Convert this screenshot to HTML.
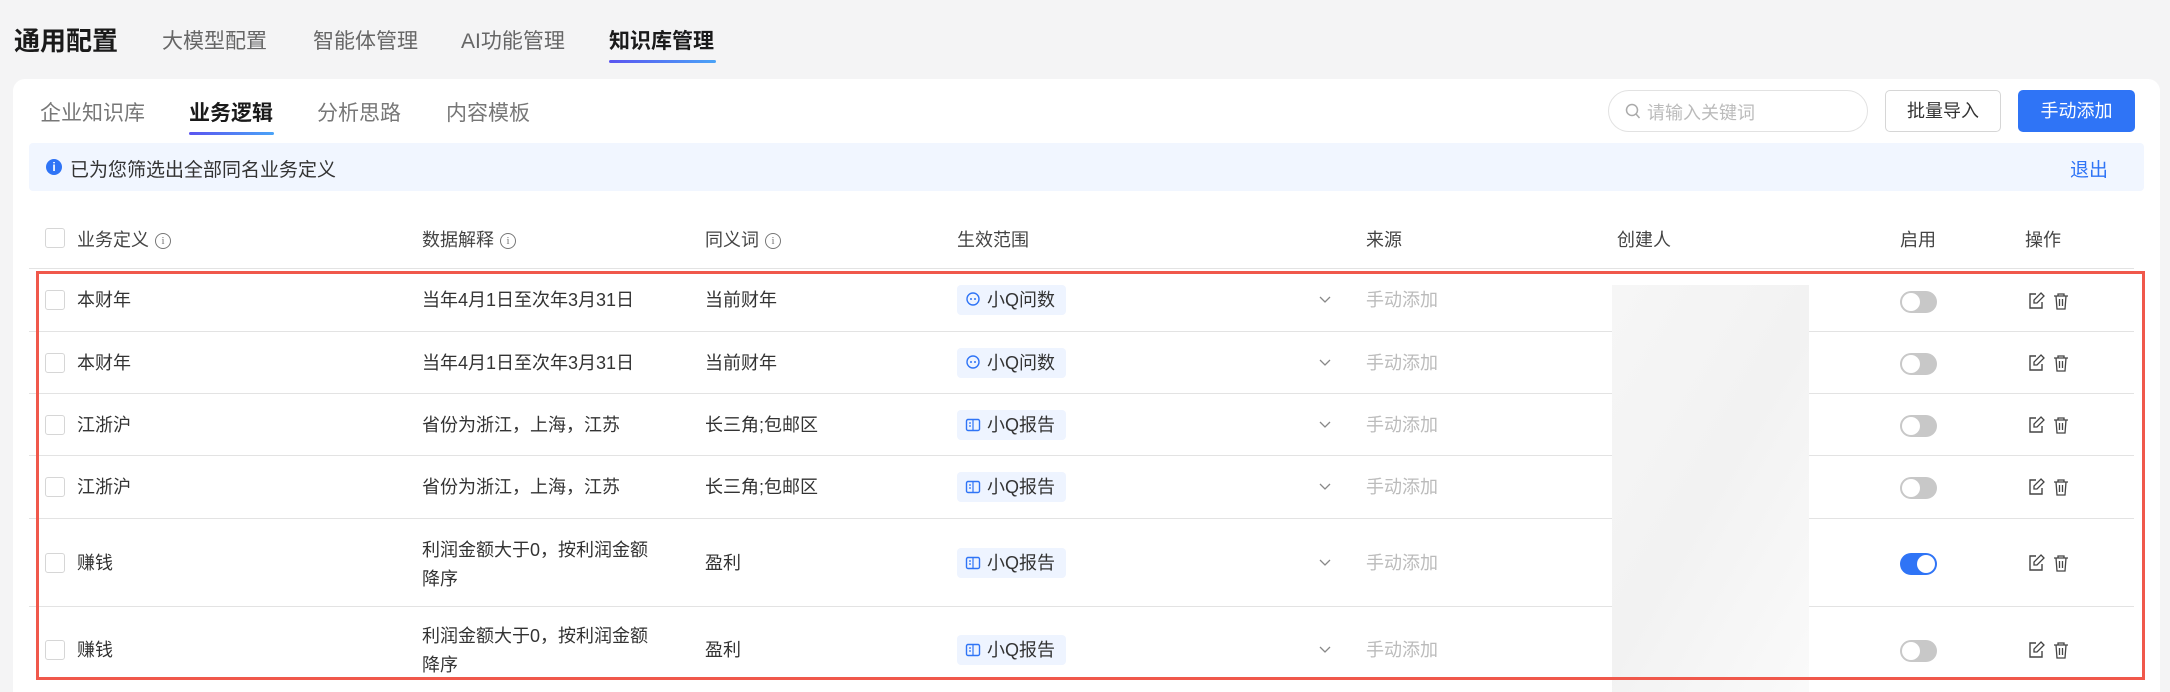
<!DOCTYPE html>
<html style="width:2170px;height:692px;overflow:hidden"><head><meta charset="utf-8"><style>
*{margin:0;padding:0;box-sizing:border-box}
body{width:2170px;height:692px;background:#f4f4f5;font-family:"Liberation Sans","Noto Sans CJK SC",sans-serif;position:relative;overflow:hidden;color:#222}
.a{position:absolute;white-space:nowrap}
.card{position:absolute;left:13px;top:79px;width:2147px;height:613px;background:#fff;border-radius:12px 12px 0 0}
.t{font-size:18px;color:#333;line-height:24px}
.h{font-size:18px;color:#444}
.cb{position:absolute;width:20px;height:20px;border:1px solid #d6d6d6;border-radius:3px;background:#fff}
.line{position:absolute;left:29px;width:2105px;height:1px;background:#e3e3e3}
.tag{position:absolute;left:957px;width:109px;height:30px;background:#eef4ff;border-radius:4px;font-size:18px;color:#333;line-height:30px;padding-left:30px}
.tag svg{position:absolute;left:8px;top:7px}
.tog{position:absolute;left:1900px;width:37px;height:22px;border-radius:11px;background:#c8c8c8}
.tog::after{content:"";position:absolute;left:2px;top:2px;width:18px;height:18px;border-radius:50%;background:#fff}
.tog.on{background:#2f74f6}.tog.on::after{left:17px}
.info{display:inline-block;width:16px;height:16px;border:1.3px solid #777;border-radius:50%;font-size:11px;line-height:14px;text-align:center;color:#777;vertical-align:2px;margin-left:6px;font-family:"Liberation Serif",serif}
</style></head><body>
<div class="a" style="left:14px;top:21px;font-size:26px;font-weight:bold;color:#1a1a1a">通用配置</div>
<div class="a" style="left:162px;top:25px;font-size:21px;color:#666">大模型配置</div>
<div class="a" style="left:313px;top:25px;font-size:21px;color:#666">智能体管理</div>
<div class="a" style="left:461px;top:25px;font-size:21px;color:#666">AI功能管理</div>
<div class="a" style="left:609px;top:25px;font-size:21px;color:#1a1a1a;font-weight:bold">知识库管理</div>
<div class="a" style="left:609px;top:60px;width:107px;height:3px;border-radius:2px;background:linear-gradient(90deg,#5b55f0,#4aa3f7)"></div>

<div class="card"></div>
<div class="a" style="left:40px;top:97px;font-size:21px;color:#777">企业知识库</div>
<div class="a" style="left:189px;top:97px;font-size:21px;color:#1a1a1a;font-weight:bold">业务逻辑</div>
<div class="a" style="left:189px;top:132px;width:85px;height:3px;border-radius:2px;background:linear-gradient(90deg,#5b55f0,#4aa3f7)"></div>
<div class="a" style="left:317px;top:97px;font-size:21px;color:#777">分析思路</div>
<div class="a" style="left:446px;top:97px;font-size:21px;color:#777">内容模板</div>

<div class="a" style="left:1608px;top:90px;width:260px;height:42px;border:1px solid #e2e2e2;border-radius:21px"></div>
<svg class="a" style="left:1625px;top:103px" width="16" height="17" viewBox="0 0 16 17"><circle cx="7" cy="7" r="5.5" fill="none" stroke="#aaa" stroke-width="1.5"/><path d="M11 11l3.5 4" stroke="#aaa" stroke-width="1.5"/></svg>
<div class="a" style="left:1647px;top:99px;font-size:18px;color:#bbb">请输入关键词</div>
<div class="a" style="left:1885px;top:90px;width:116px;height:42px;border:1px solid #d6d6d6;border-radius:5px;font-size:18px;color:#333;text-align:center;line-height:40px">批量导入</div>
<div class="a" style="left:2018px;top:90px;width:117px;height:42px;background:#2f74f6;border-radius:5px;font-size:18px;color:#fff;text-align:center;line-height:42px">手动添加</div>

<div class="a" style="left:29px;top:143px;width:2115px;height:48px;background:#f1f6ff;border-radius:4px"></div>
<div class="a" style="left:46px;top:159px;width:16px;height:16px;border-radius:50%;background:#2f74f6;color:#fff;font-size:12px;text-align:center;line-height:16px;font-weight:bold">i</div>
<div class="a" style="left:70px;top:155px;font-size:19px;color:#333">已为您筛选出全部同名业务定义</div>
<div class="a" style="left:2070px;top:155px;font-size:19px;color:#2f74f6">退出</div>

<div class="cb" style="left:45px;top:228px"></div>
<div class="a h" style="left:77px;top:226px">业务定义<span class="info">i</span></div>
<div class="a h" style="left:422px;top:226px">数据解释<span class="info">i</span></div>
<div class="a h" style="left:705px;top:226px">同义词<span class="info">i</span></div>
<div class="a h" style="left:957px;top:226px">生效范围</div>
<div class="a h" style="left:1366px;top:226px">来源</div>
<div class="a h" style="left:1617px;top:226px">创建人</div>
<div class="a h" style="left:1900px;top:226px">启用</div>
<div class="a h" style="left:2025px;top:226px">操作</div>
<div class="line" style="top:268px"></div>
<div class="line" style="top:331px"></div>
<div class="line" style="top:393px"></div>
<div class="line" style="top:455px"></div>
<div class="line" style="top:518px"></div>
<div class="line" style="top:606px"></div>

<div class="a" style="left:1612px;top:285px;width:197px;height:407px;background:linear-gradient(120deg,#f6f6f6,#f2f2f2 50%,#fafafa)"></div>

<div class="cb" style="left:45px;top:290px"></div><div class="a t" style="left:77px;top:288px">本财年</div><div class="a t" style="left:422px;top:288px">当年4月1日至次年3月31日</div><div class="a t" style="left:705px;top:288px">当前财年</div>
<div class="tag" style="top:285px"><svg width="16" height="16" viewBox="0 0 16 16"><circle cx="8" cy="7" r="6" fill="none" stroke="#2f74f6" stroke-width="1.4"/><circle cx="6" cy="7" r="1" fill="#2f74f6"/><circle cx="10" cy="7" r="1" fill="#2f74f6"/></svg>小Q问数</div>
<div class="cb" style="left:45px;top:353px"></div><div class="a t" style="left:77px;top:351px">本财年</div><div class="a t" style="left:422px;top:351px">当年4月1日至次年3月31日</div><div class="a t" style="left:705px;top:351px">当前财年</div>
<div class="tag" style="top:348px"><svg width="16" height="16" viewBox="0 0 16 16"><circle cx="8" cy="7" r="6" fill="none" stroke="#2f74f6" stroke-width="1.4"/><circle cx="6" cy="7" r="1" fill="#2f74f6"/><circle cx="10" cy="7" r="1" fill="#2f74f6"/></svg>小Q问数</div>
<div class="cb" style="left:45px;top:415px"></div><div class="a t" style="left:77px;top:413px">江浙沪</div><div class="a t" style="left:422px;top:413px">省份为浙江，上海，江苏</div><div class="a t" style="left:705px;top:413px">长三角;包邮区</div>
<div class="tag" style="top:410px"><svg width="16" height="16" viewBox="0 0 16 16"><rect x="1.5" y="2.5" width="13" height="11" rx="1.5" fill="none" stroke="#2f74f6" stroke-width="1.4"/><path d="M8 3v10M4 6h2M4 9h2" stroke="#2f74f6" stroke-width="1.2"/></svg>小Q报告</div>
<div class="cb" style="left:45px;top:477px"></div><div class="a t" style="left:77px;top:475px">江浙沪</div><div class="a t" style="left:422px;top:475px">省份为浙江，上海，江苏</div><div class="a t" style="left:705px;top:475px">长三角;包邮区</div>
<div class="tag" style="top:472px"><svg width="16" height="16" viewBox="0 0 16 16"><rect x="1.5" y="2.5" width="13" height="11" rx="1.5" fill="none" stroke="#2f74f6" stroke-width="1.4"/><path d="M8 3v10M4 6h2M4 9h2" stroke="#2f74f6" stroke-width="1.2"/></svg>小Q报告</div>
<div class="cb" style="left:45px;top:553px"></div><div class="a t" style="left:77px;top:551px">赚钱</div><div class="a t" style="left:422px;top:536px;line-height:29px">利润金额大于0，按利润金额<br>降序</div><div class="a t" style="left:705px;top:551px">盈利</div>
<div class="tag" style="top:548px"><svg width="16" height="16" viewBox="0 0 16 16"><rect x="1.5" y="2.5" width="13" height="11" rx="1.5" fill="none" stroke="#2f74f6" stroke-width="1.4"/><path d="M8 3v10M4 6h2M4 9h2" stroke="#2f74f6" stroke-width="1.2"/></svg>小Q报告</div>
<div class="cb" style="left:45px;top:640px"></div><div class="a t" style="left:77px;top:638px">赚钱</div><div class="a t" style="left:422px;top:622px;line-height:29px">利润金额大于0，按利润金额<br>降序</div><div class="a t" style="left:705px;top:638px">盈利</div>
<div class="tag" style="top:635px"><svg width="16" height="16" viewBox="0 0 16 16"><rect x="1.5" y="2.5" width="13" height="11" rx="1.5" fill="none" stroke="#2f74f6" stroke-width="1.4"/><path d="M8 3v10M4 6h2M4 9h2" stroke="#2f74f6" stroke-width="1.2"/></svg>小Q报告</div>

<svg class="a" style="left:1318px;top:295px" width="14" height="10"><path d="M2 2l5 5 5-5" fill="none" stroke="#888" stroke-width="1.3"/></svg>
<svg class="a" style="left:1318px;top:358px" width="14" height="10"><path d="M2 2l5 5 5-5" fill="none" stroke="#888" stroke-width="1.3"/></svg>
<svg class="a" style="left:1318px;top:420px" width="14" height="10"><path d="M2 2l5 5 5-5" fill="none" stroke="#888" stroke-width="1.3"/></svg>
<svg class="a" style="left:1318px;top:482px" width="14" height="10"><path d="M2 2l5 5 5-5" fill="none" stroke="#888" stroke-width="1.3"/></svg>
<svg class="a" style="left:1318px;top:558px" width="14" height="10"><path d="M2 2l5 5 5-5" fill="none" stroke="#888" stroke-width="1.3"/></svg>
<svg class="a" style="left:1318px;top:645px" width="14" height="10"><path d="M2 2l5 5 5-5" fill="none" stroke="#888" stroke-width="1.3"/></svg>
<div class="a t" style="left:1366px;top:288px;color:#bbb">手动添加</div>
<div class="a t" style="left:1366px;top:351px;color:#bbb">手动添加</div>
<div class="a t" style="left:1366px;top:413px;color:#bbb">手动添加</div>
<div class="a t" style="left:1366px;top:475px;color:#bbb">手动添加</div>
<div class="a t" style="left:1366px;top:551px;color:#bbb">手动添加</div>
<div class="a t" style="left:1366px;top:638px;color:#bbb">手动添加</div>
<div class="tog" style="top:291px"></div>
<div class="tog" style="top:353px"></div>
<div class="tog" style="top:415px"></div>
<div class="tog" style="top:477px"></div>
<div class="tog on" style="top:553px"></div>
<div class="tog" style="top:640px"></div>

<svg class="a" style="left:2027px;top:291px" width="50" height="20" viewBox="0 0 50 20"><path d="M9 3H3v14h12v-6" fill="none" stroke="#444" stroke-width="1.4"/><path d="M14 2l3 3-7 7H7V9z" fill="none" stroke="#444" stroke-width="1.3"/><path d="M27 5h14M31 5V3h6v2M29 5l1 13h8l1-13M32.5 8v7M35.5 8v7" fill="none" stroke="#444" stroke-width="1.3"/></svg>
<svg class="a" style="left:2027px;top:353px" width="50" height="20" viewBox="0 0 50 20"><path d="M9 3H3v14h12v-6" fill="none" stroke="#444" stroke-width="1.4"/><path d="M14 2l3 3-7 7H7V9z" fill="none" stroke="#444" stroke-width="1.3"/><path d="M27 5h14M31 5V3h6v2M29 5l1 13h8l1-13M32.5 8v7M35.5 8v7" fill="none" stroke="#444" stroke-width="1.3"/></svg>
<svg class="a" style="left:2027px;top:415px" width="50" height="20" viewBox="0 0 50 20"><path d="M9 3H3v14h12v-6" fill="none" stroke="#444" stroke-width="1.4"/><path d="M14 2l3 3-7 7H7V9z" fill="none" stroke="#444" stroke-width="1.3"/><path d="M27 5h14M31 5V3h6v2M29 5l1 13h8l1-13M32.5 8v7M35.5 8v7" fill="none" stroke="#444" stroke-width="1.3"/></svg>
<svg class="a" style="left:2027px;top:477px" width="50" height="20" viewBox="0 0 50 20"><path d="M9 3H3v14h12v-6" fill="none" stroke="#444" stroke-width="1.4"/><path d="M14 2l3 3-7 7H7V9z" fill="none" stroke="#444" stroke-width="1.3"/><path d="M27 5h14M31 5V3h6v2M29 5l1 13h8l1-13M32.5 8v7M35.5 8v7" fill="none" stroke="#444" stroke-width="1.3"/></svg>
<svg class="a" style="left:2027px;top:553px" width="50" height="20" viewBox="0 0 50 20"><path d="M9 3H3v14h12v-6" fill="none" stroke="#444" stroke-width="1.4"/><path d="M14 2l3 3-7 7H7V9z" fill="none" stroke="#444" stroke-width="1.3"/><path d="M27 5h14M31 5V3h6v2M29 5l1 13h8l1-13M32.5 8v7M35.5 8v7" fill="none" stroke="#444" stroke-width="1.3"/></svg>
<svg class="a" style="left:2027px;top:640px" width="50" height="20" viewBox="0 0 50 20"><path d="M9 3H3v14h12v-6" fill="none" stroke="#444" stroke-width="1.4"/><path d="M14 2l3 3-7 7H7V9z" fill="none" stroke="#444" stroke-width="1.3"/><path d="M27 5h14M31 5V3h6v2M29 5l1 13h8l1-13M32.5 8v7M35.5 8v7" fill="none" stroke="#444" stroke-width="1.3"/></svg>

<div class="a" style="left:36px;top:271px;width:2109px;height:409px;border:3px solid #f0584b"></div>
</body></html>
